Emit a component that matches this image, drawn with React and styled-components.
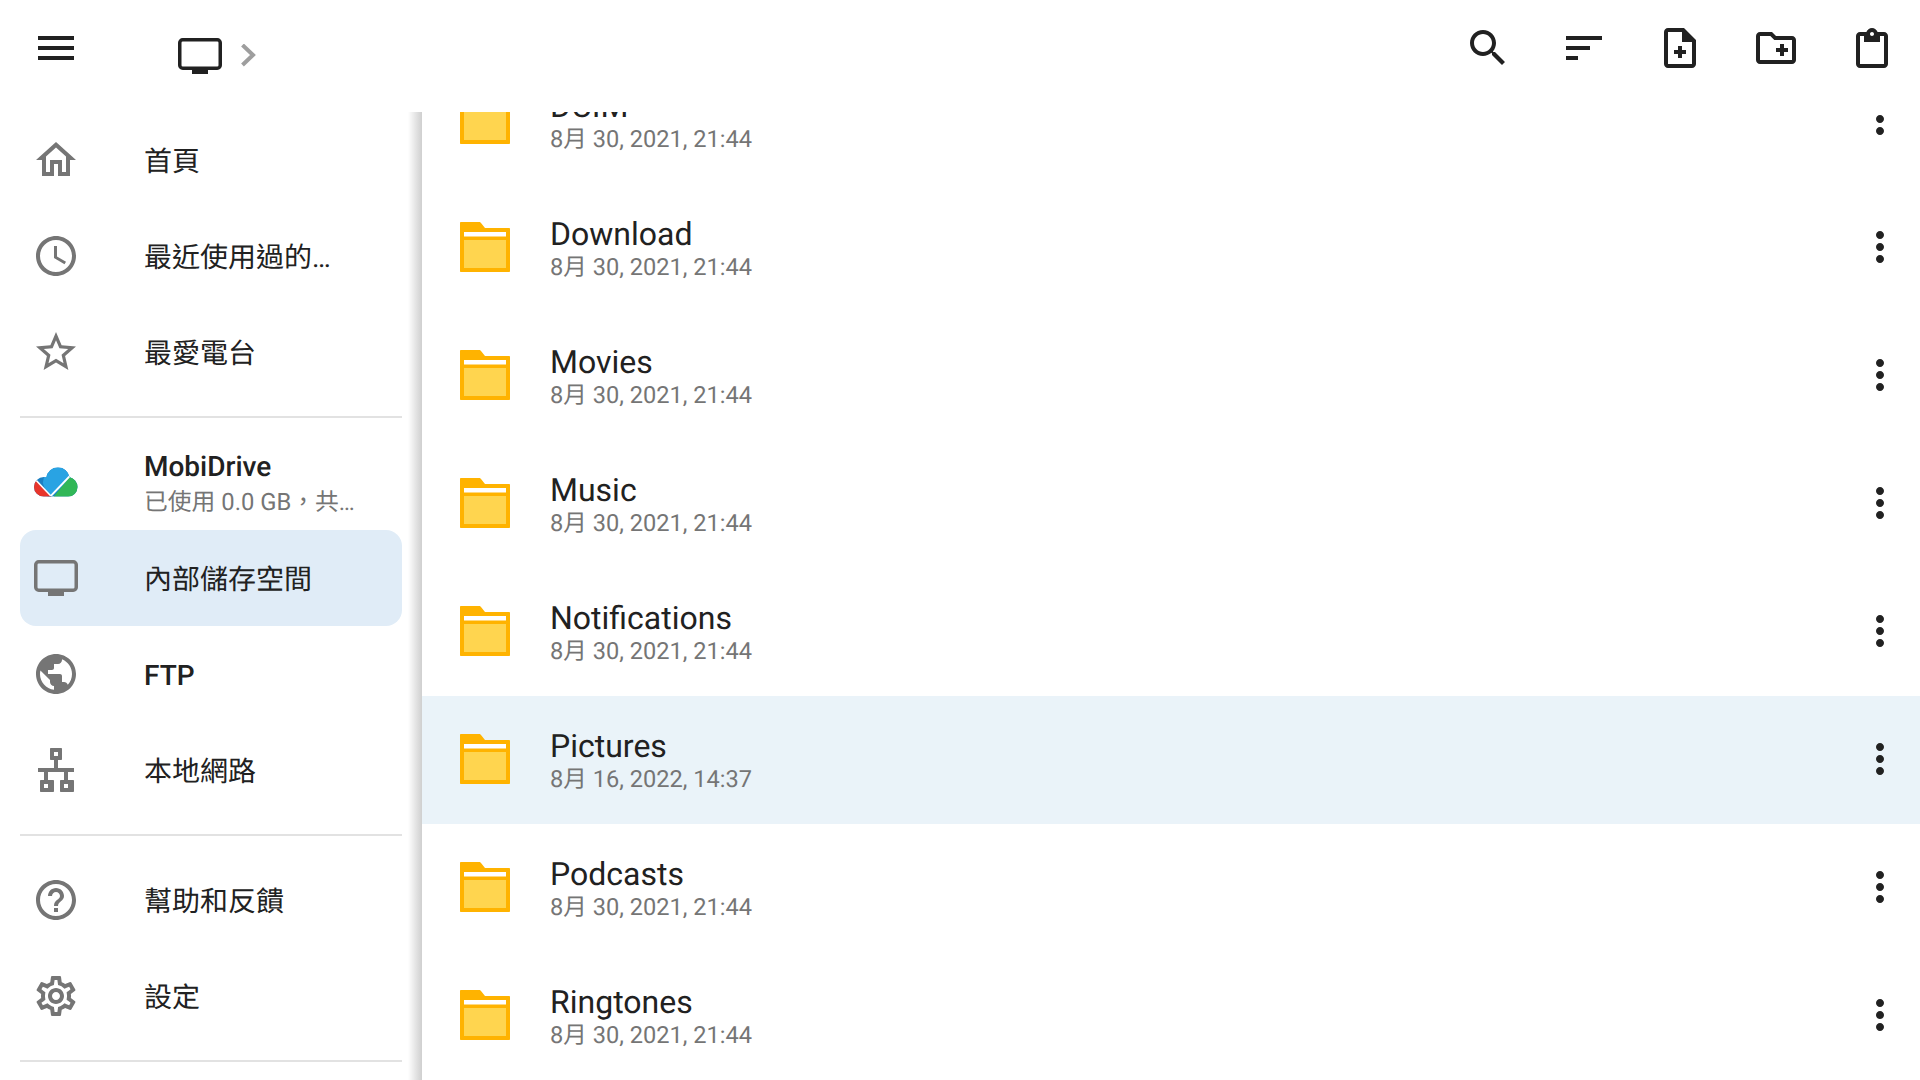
import React from 'react';
import styled, { createGlobalStyle } from 'styled-components';

const INK = '#212121';
const GREY = '#757575';

const GlobalStyle = createGlobalStyle`
  html, body {
    margin: 0;
    height: 100%;
    overflow: hidden;
    background: #fff;
  }
  body {
    font-family: Roboto, "Noto Sans CJK TC", sans-serif;
    text-rendering: geometricPrecision;
  }
`;

const Page = styled.div`
  display: flex;
  flex-direction: column;
  width: 1920px;
  height: 1080px;
  overflow: hidden;
`;

const Toolbar = styled.header`
  display: flex;
  align-items: flex-start;
  flex: 0 0 112px;
  padding-left: 8px;
  background: #fff;
`;

const ToolButton = styled.button`
  display: flex;
  align-items: center;
  justify-content: center;
  width: 96px;
  height: 96px;
  padding: 0;
  border: 0;
  background: none;
  color: ${INK};
`;

const Breadcrumb = styled.div`
  display: flex;
  align-items: center;
  gap: 18px;
  height: 112px;
  margin-left: 74px;
  color: ${INK};
`;

const Actions = styled.div`
  display: flex;
  margin-left: auto;
`;

const Body = styled.div`
  display: flex;
  flex: 1;
  min-height: 0;
`;

const Drawer = styled.nav`
  display: flex;
  flex-direction: column;
  flex: 0 0 408px;
  box-sizing: border-box;
  padding: 0 6px 0 20px;
  background: #fff;
`;

const DrawerShadow = styled.div`
  flex: 0 0 14px;
  background: linear-gradient(to right, #fff 0%, #e4e4e4 55%, #cfcfcf 100%);
`;

const DrawerItem = styled.div`
  display: flex;
  align-items: center;
  flex: 0 0 96px;
  padding-left: 10px;
  border-radius: 16px;
  background: ${props => (props.$selected ? '#e0ecf7' : 'transparent')};
  color: ${GREY};
`;

const DrawerIcon = styled.div`
  display: flex;
  align-items: center;
  justify-content: center;
  flex: 0 0 52px;
  margin-right: 62px;
`;

const DrawerText = styled.div`
  display: flex;
  flex-direction: column;
  padding-top: ${props => (props.$stacked ? 5 : 3)}px;
`;

const DrawerLabel = styled.span`
  font-size: 28px;
  line-height: 36px;
  font-weight: ${props => (props.$strong ? 500 : 400)};
  color: ${INK};
`;

const DrawerSub = styled.span`
  font-size: 23.8px;
  line-height: 35px;
  color: ${GREY};
`;

const Divider = styled.hr`
  flex: 0 0 2px;
  width: 100%;
  margin: 16px 0;
  border: 0;
  background: #e2e2e2;
`;

const FileList = styled.main`
  flex: 1;
  min-width: 0;
  overflow: hidden;
`;

const Rows = styled.div`
  margin-top: -56px;
`;

const FileRow = styled.div`
  display: flex;
  align-items: center;
  box-sizing: border-box;
  height: 128px;
  padding: 0 16px 2px 38px;
  background: ${props => (props.$selected ? '#eaf3f9' : '#fff')};
`;

const FileText = styled.div`
  display: flex;
  flex-direction: column;
  gap: 1px;
  flex: 1;
  margin-left: 40px;
  padding-top: 2px;
`;

const FileName = styled.span`
  font-size: 32px;
  line-height: 36px;
  color: ${INK};
`;

const FileDate = styled.span`
  font-size: 23.6px;
  line-height: 28px;
  color: ${GREY};
`;

const MoreButton = styled.div`
  display: flex;
  color: ${INK};
`;

const Icon = ({ d, size = 48 }) => (
  <svg width={size} height={size} viewBox="0 0 24 24" fill="currentColor" fillRule="evenodd">
    <path d={d} />
  </svg>
);

const Monitor = () => (
  <svg width="44" height="36" viewBox="0 0 44 36" fill="none">
    <rect x="1.75" y="1.75" width="40.5" height="28.5" rx="3" stroke="currentColor" strokeWidth="3.5" />
    <rect x="14" y="31" width="16" height="5" fill="currentColor" />
  </svg>
);

const Chevron = () => (
  <svg width="16" height="24" viewBox="0 0 16 24" fill="none">
    <path d="M2.5 1 L13 11 L2.5 21" stroke="#9e9e9e" strokeWidth="4" />
  </svg>
);

const Folder = () => (
  <svg width="50" height="50" viewBox="0 0 50 50">
    <path d="M1 0h18c1 0 1.6.5 2.2 1.2L25 6h24c.6 0 1 .4 1 1v42c0 .6-.4 1-1 1H1c-.6 0-1-.4-1-1V1c0-.6.4-1 1-1z" fill="#ffb300" />
    <rect x="4" y="10" width="42" height="4.5" fill="#fff" />
    <rect x="4" y="18" width="42" height="28" fill="#ffd54f" />
  </svg>
);

const CloudLogo = () => (
  <svg width="44" height="30" viewBox="0 0 45 30">
    <defs>
      <clipPath id="cloud">
        <circle cx="10" cy="20" r="10" />
        <circle cx="24.5" cy="12" r="12" />
        <circle cx="34.5" cy="20" r="10" />
        <rect x="10" y="15" width="25" height="15" />
      </clipPath>
    </defs>
    <g clipPath="url(#cloud)">
      <rect width="45" height="30" fill="#1c7fc2" />
      <path d="M9 16 L12 0 H45 V4 L18 30 H14 Z" fill="#29a3e3" />
      <path d="M0 11 L18 30 H0 Z" fill="#e8352b" />
      <path d="M20 30 L38 8 H45 V30 Z" fill="#31b757" />
      <path d="M0 11 L17 29" stroke="#fff" strokeWidth="1.6" />
      <path d="M17 29.5 L38 7.5" stroke="#fff" strokeWidth="2" />
    </g>
  </svg>
);

const paths = {
  menu: 'M3 18h18v-2H3v2zm0-5h18v-2H3v2zm0-7v2h18V6H3z',
  search: 'M15.5 14h-.79l-.28-.27C15.41 12.59 16 11.11 16 9.5 16 5.91 13.09 3 9.5 3S3 5.91 3 9.5 5.91 16 9.5 16c1.61 0 3.09-.59 4.23-1.57l.27.28v.79l5 4.99L20.49 19l-4.99-5zm-6 0C7.01 14 5 11.99 5 9.5S7.01 5 9.5 5 14 7.01 14 9.5 11.99 14 9.5 14z',
  sort: 'M3 18h6v-2H3v2zM3 6v2h18V6H3zm0 7h12v-2H3v2z',
  noteAdd: 'M14 2H6c-1.1 0-2 .9-2 2v16c0 1.1.9 2 2 2h12c1.1 0 2-.9 2-2V8zM18 20H6V4h7v5h5zM11 11h2v2h2v2h-2v2h-2v-2H9v-2h2z',
  folderAdd: 'M20 6h-8l-2-2H4c-1.11 0-1.99.89-1.99 2L2 18c0 1.11.89 2 2 2h16c1.11 0 2-.89 2-2V8c0-1.11-.89-2-2-2zm0 12H4V6h5.17l2 2H20v10zM12 12h2v-2h2v2h2v2h-2v2h-2v-2h-2z',
  clipboard: 'M18 4h-3.2C14.4 2.84 13.3 2 12 2s-2.4.84-2.8 2H6c-1.1 0-2 .9-2 2v14c0 1.1.9 2 2 2h12c1.1 0 2-.9 2-2V6c0-1.1-.9-2-2-2zM12 4c.55 0 1 .45 1 1s-.45 1-1 1-1-.45-1-1 .45-1 1-1zM18 20H6V6h2v3h8V6h2z',
  home: 'M12 5.69l5 4.5V18h-2v-6H9v6H7v-7.81l5-4.5M12 3L2 12h3v8h6v-6h2v6h6v-8h3L12 3z',
  clock: 'M11.99 2C6.47 2 2 6.48 2 12s4.47 10 9.99 10C17.52 22 22 17.52 22 12S17.52 2 11.99 2zM12 20c-4.42 0-8-3.58-8-8s3.58-8 8-8 8 3.58 8 8-3.58 8-8 8zM12.5 7H11v6l5.25 3.15.75-1.23-4.5-2.67z',
  star: 'M22 9.24l-7.19-.62L12 2 9.19 8.63 2 9.24l5.46 4.73L5.82 21 12 17.27 18.18 21l-1.63-7.03L22 9.24zM12 15.4l-3.76 2.27 1-4.28-3.32-2.88 4.38-.38L12 6.1l1.71 4.04 4.38.38-3.32 2.88 1 4.28L12 15.4z',
  globe: 'M12 2C6.48 2 2 6.48 2 12s4.48 10 10 10 10-4.48 10-10S17.52 2 12 2zm-1 17.93c-3.95-.49-7-3.85-7-7.93 0-.62.08-1.21.21-1.79L9 15v1c0 1.1.9 2 2 2v1.93zm6.9-2.54c-.26-.81-1-1.39-1.9-1.39h-1v-3c0-.55-.45-1-1-1H8v-2h2c.55 0 1-.45 1-1V7h2c1.1 0 2-.9 2-2v-.41c2.93 1.19 5 4.06 5 7.41 0 2.08-.8 3.97-2.1 5.39z',
  lan: 'M9.5 1h5c.3 0 .5.2.5.5v5c0 .3-.2.5-.5.5H13v4h8v2h-3v4h2.5c.3 0 .5.2.5.5v5c0 .3-.2.5-.5.5h-6c-.3 0-.5-.2-.5-.5v-5c0-.3.2-.5.5-.5H16v-4H8v4h2.5c.3 0 .5.2.5.5v5c0 .3-.2.5-.5.5h-6c-.3 0-.5-.2-.5-.5v-5c0-.3.2-.5.5-.5H6v-4H3v-2h8V7H9.5c-.3 0-.5-.2-.5-.5v-5c0-.3.2-.5.5-.5zM11 3v2h2V3zM6 19v2h2v-2zM16 19v2h2v-2z',
  help: 'M11 18h2v-2h-2v2zm1-16C6.48 2 2 6.48 2 12s4.48 10 10 10 10-4.48 10-10S17.52 2 12 2zm0 18c-4.41 0-8-3.59-8-8s3.59-8 8-8 8 3.59 8 8-3.59 8-8 8zm0-14c-2.21 0-4 1.79-4 4h2c0-1.1.9-2 2-2s2 .9 2 2c0 2-3 1.75-3 5h2c0-2.25 3-2.5 3-5 0-2.21-1.79-4-4-4z',
  settings: 'M19.43 12.98c.04-.32.07-.64.07-.98 0-.34-.03-.66-.07-.98l2.11-1.65c.19-.15.24-.42.12-.64l-2-3.46c-.09-.16-.26-.25-.44-.25-.06 0-.12.01-.17.03l-2.49 1c-.52-.4-1.08-.73-1.69-.98l-.38-2.65C14.46 2.18 14.25 2 14 2h-4c-.25 0-.46.18-.49.42l-.38 2.65c-.61.25-1.17.59-1.69.98l-2.49-1c-.06-.02-.12-.03-.18-.03-.17 0-.34.09-.43.25l-2 3.46c-.13.22-.07.49.12.64l2.11 1.65c-.04.32-.07.65-.07.98 0 .33.03.66.07.98l-2.11 1.65c-.19.15-.24.42-.12.64l2 3.46c.09.16.26.25.44.25.06 0 .12-.01.17-.03l2.49-1c.52.4 1.08.73 1.69.98l.38 2.65c.03.24.24.42.49.42h4c.25 0 .46-.18.49-.42l.38-2.65c.61-.25 1.17-.59 1.69-.98l2.49 1c.06.02.12.03.18.03.17 0 .34-.09.43-.25l2-3.46c.12-.22.07-.49-.12-.64l-2.11-1.65zm-1.98-1.71c.04.31.05.52.05.73 0 .21-.02.43-.05.73l-.14 1.13.89.7 1.08.84-.7 1.21-1.27-.51-1.04-.42-.9.68c-.43.32-.84.56-1.25.73l-1.06.43-.16 1.13-.2 1.35h-1.4l-.19-1.35-.16-1.13-1.06-.43c-.43-.18-.83-.41-1.23-.71l-.91-.7-1.06.43-1.27.51-.7-1.21 1.08-.84.89-.7-.14-1.13c-.03-.31-.05-.54-.05-.74s.02-.43.05-.73l.14-1.13-.89-.7-1.08-.84.7-1.21 1.27.51 1.04.42.9-.68c.43-.32.84-.56 1.25-.73l1.06-.43.16-1.13.2-1.35h1.39l.19 1.35.16 1.13 1.06.43c.43.18.83.41 1.23.71l.91.7 1.06-.43 1.27-.51.7 1.21-1.07.85-.89.7.14 1.13zM12 8c-2.21 0-4 1.79-4 4s1.79 4 4 4 4-1.79 4-4-1.79-4-4-4zm0 6c-1.1 0-2-.9-2-2s.9-2 2-2 2 .9 2 2-.9 2-2 2z',
  more: 'M12 8c1.1 0 2-.9 2-2s-.9-2-2-2-2 .9-2 2 .9 2 2 2zm0 2c-1.1 0-2 .9-2 2s.9 2 2 2 2-.9 2-2-.9-2-2-2zm0 6c-1.1 0-2 .9-2 2s.9 2 2 2 2-.9 2-2-.9-2-2-2z'
};

const files = [
  { name: 'DCIM', date: '8月 30, 2021, 21:44' },
  { name: 'Download', date: '8月 30, 2021, 21:44' },
  { name: 'Movies', date: '8月 30, 2021, 21:44' },
  { name: 'Music', date: '8月 30, 2021, 21:44' },
  { name: 'Notifications', date: '8月 30, 2021, 21:44' },
  { name: 'Pictures', date: '8月 16, 2022, 14:37', selected: true },
  { name: 'Podcasts', date: '8月 30, 2021, 21:44' },
  { name: 'Ringtones', date: '8月 30, 2021, 21:44' }
];

const NavItem = ({ icon, label, sub, strong, selected }) => (
  <DrawerItem $selected={selected}>
    <DrawerIcon>{icon}</DrawerIcon>
    <DrawerText $stacked={Boolean(sub)}>
      <DrawerLabel $strong={strong}>{label}</DrawerLabel>
      {sub && <DrawerSub>{sub}</DrawerSub>}
    </DrawerText>
  </DrawerItem>
);

export default function App() {
  return (
    <Page>
      <GlobalStyle />
      <Toolbar>
        <ToolButton><Icon d={paths.menu} /></ToolButton>
        <Breadcrumb>
          <Monitor />
          <Chevron />
        </Breadcrumb>
        <Actions>
          <ToolButton><Icon d={paths.search} /></ToolButton>
          <ToolButton><Icon d={paths.sort} /></ToolButton>
          <ToolButton><Icon d={paths.noteAdd} /></ToolButton>
          <ToolButton><Icon d={paths.folderAdd} /></ToolButton>
          <ToolButton><Icon d={paths.clipboard} /></ToolButton>
        </Actions>
      </Toolbar>
      <Body>
        <Drawer>
          <NavItem icon={<Icon d={paths.home} />} label="首頁" />
          <NavItem icon={<Icon d={paths.clock} />} label="最近使用過的…" />
          <NavItem icon={<Icon d={paths.star} />} label="最愛電台" />
          <Divider />
          <NavItem icon={<CloudLogo />} label="MobiDrive" sub="已使用 0.0 GB，共…" strong />
          <NavItem icon={<Monitor />} label="內部儲存空間" selected />
          <NavItem icon={<Icon d={paths.globe} />} label="FTP" strong />
          <NavItem icon={<Icon d={paths.lan} />} label="本地網路" />
          <Divider />
          <NavItem icon={<Icon d={paths.help} />} label="幫助和反饋" />
          <NavItem icon={<Icon d={paths.settings} />} label="設定" />
          <Divider />
        </Drawer>
        <DrawerShadow />
        <FileList>
          <Rows>
            {files.map(file => (
              <FileRow key={file.name} $selected={file.selected}>
                <Folder />
                <FileText>
                  <FileName>{file.name}</FileName>
                  <FileDate>{file.date}</FileDate>
                </FileText>
                <MoreButton><Icon d={paths.more} /></MoreButton>
              </FileRow>
            ))}
          </Rows>
        </FileList>
      </Body>
    </Page>
  );
}
